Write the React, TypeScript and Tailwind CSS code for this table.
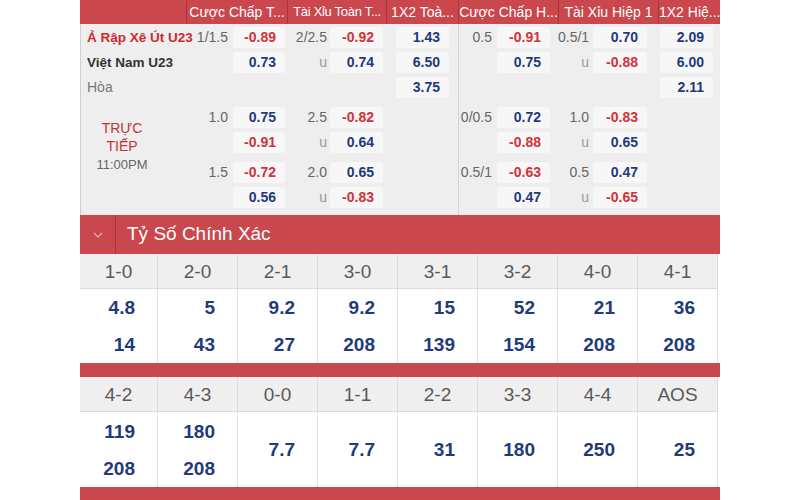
import { ReactNode } from "react"

type Pair = { l?: string; v?: string }

const ODD = "h-[21px] bg-[#f7f7f7] rounded-[3px] flex items-center justify-end pr-[9px] text-[14px] font-bold"
const LABEL = "h-[21px] leading-[21px] text-right text-[14px] text-[#666]"

function Box({ v, w }: { v?: string; w: string }) {
  if (!v) return <div className={`${w} h-[21px]`} />
  const color = v.startsWith("-") ? "text-[#d2323a]" : "text-[#1f3a7c]"
  return <div className={`${w} ${ODD} ${color}`}>{v}</div>
}

function Label({ t, w }: { t?: string; w: string }) {
  return <div className={`${w} ${LABEL} ${t === "u" ? "text-[#999]" : ""}`}>{t}</div>
}

// one row of the full-time block: handicap, over/under, 1x2
function FullRow({ cc, tx, x12 }: { cc?: Pair; tx?: Pair; x12?: string }) {
  return (
    <div className="flex h-[25px]">
      <div className="w-[101px] flex">
        <Label t={cc?.l} w="w-[42px]" />
        <div className="ml-[5px]">
          <Box v={cc?.v} w="w-[52px]" />
        </div>
      </div>
      <div className="w-[99px] flex">
        <Label t={tx?.l} w="w-[40px]" />
        <div className="ml-[3px]">
          <Box v={tx?.v} w="w-[53px]" />
        </div>
      </div>
      <div className="w-[72px] pl-[10px]">
        <Box v={x12} w="w-[53px]" />
      </div>
    </div>
  )
}

function HalfRow({ cc, tx, x12 }: { cc?: Pair; tx?: Pair; x12?: string }) {
  return (
    <div className="flex h-[25px]">
      <div className="w-[99px] flex">
        <Label t={cc?.l} w="w-[33px]" />
        <div className="ml-[5px]">
          <Box v={cc?.v} w="w-[53px]" />
        </div>
      </div>
      <div className="w-[100px] flex">
        <Label t={tx?.l} w="w-[31px]" />
        <div className="ml-[4px]">
          <Box v={tx?.v} w="w-[54px]" />
        </div>
      </div>
      <div className="w-[62px] pl-[2px]">
        <Box v={x12} w="w-[53px]" />
      </div>
    </div>
  )
}

function Groups({ children }: { children: ReactNode[] }) {
  return (
    <div className="flex flex-col pb-[3px]">
      <div className="pt-[3px]">{children[0]}</div>
      <div className="pt-[5px]">{children[1]}</div>
      <div className="pt-[5px]">{children[2]}</div>
    </div>
  )
}

const headers = [
  { t: "", w: "w-[106px]", f: "text-[14px]" },
  { t: "Cược Chấp T...", w: "w-[101px]", f: "text-[14px]" },
  { t: "Tài Xỉu Toàn T...", w: "w-[99px]", f: "text-[13px] tracking-[-0.3px]" },
  { t: "1X2 Toà...", w: "w-[72px]", f: "text-[14px]" },
  { t: "Cược Chấp H...", w: "w-[100px]", f: "text-[14px]" },
  { t: "Tài Xỉu Hiệp 1", w: "w-[100px]", f: "text-[14px]" },
  { t: "1X2 Hiệ...", w: "w-[62px]", f: "text-[14px]" },
]

const scoresA = [
  { s: "1-0", v: ["4.8", "14"] },
  { s: "2-0", v: ["5", "43"] },
  { s: "2-1", v: ["9.2", "27"] },
  { s: "3-0", v: ["9.2", "208"] },
  { s: "3-1", v: ["15", "139"] },
  { s: "3-2", v: ["52", "154"] },
  { s: "4-0", v: ["21", "208"] },
  { s: "4-1", v: ["36", "208"] },
]

const scoresB = [
  { s: "4-2", v: ["119", "208"] },
  { s: "4-3", v: ["180", "208"] },
  { s: "0-0", v: ["7.7"] },
  { s: "1-1", v: ["7.7"] },
  { s: "2-2", v: ["31"] },
  { s: "3-3", v: ["180"] },
  { s: "4-4", v: ["250"] },
  { s: "AOS", v: ["25"] },
]

function ScoreGrid({ items, h }: { items: { s: string; v: string[] }[]; h: string }) {
  return (
    <div className="grid grid-cols-[78px_repeat(7,80px)]">
      {items.map((it) => (
        <div key={it.s} className="h-[35px] leading-[35px] bg-[#efefef] border-r border-b border-[#dcdcdc] text-center text-[19px] text-[#5a5a5a]">
          {it.s}
        </div>
      ))}
      {items.map((it) => (
        <div key={it.s + "v"} className={`${h} bg-white border-r border-[#e2e2e2] flex flex-col justify-center items-end pr-[22px]`}>
          {it.v.map((x, i) => (
            <div key={i} className="leading-[37px] text-[19px] font-bold text-[#1f3a7c]">
              {x}
            </div>
          ))}
        </div>
      ))}
    </div>
  )
}

export default function App() {
  return (
    <div className="w-[800px] h-[500px] overflow-hidden bg-white font-['Liberation_Sans',Arial,sans-serif]">
      <div className="ml-[80px] w-[640px]">
        {/* odds header */}
        <div className="flex h-[24px] bg-[#c9474d] text-white">
          {headers.map((h, i) => (
            <div
              key={i}
              className={`${h.w} ${h.f} ${i > 0 ? "border-l border-[#a9353b]" : ""} leading-[24px] text-center whitespace-nowrap overflow-hidden`}
            >
              {h.t}
            </div>
          ))}
        </div>

        {/* odds body */}
        <div className="flex bg-[#eeeeee]">
          <div className="w-[106px] border-l border-[#cfcfcf] flex flex-col">
            <div className="pt-[3px] pl-[6px] text-[13.5px]">
              <div className="h-[25px] leading-[21px] font-bold text-[#cc2b31] whitespace-nowrap">Ả Rập Xê Út U23</div>
              <div className="h-[25px] leading-[21px] font-bold text-[#333]">Việt Nam U23</div>
              <div className="h-[25px] leading-[21px] text-[#777] text-[14px]">Hòa</div>
            </div>
            <div className="w-[82px] pt-[17px] text-center text-[14px] leading-[18px]">
              <div className="text-[#c0353a]">TRỰC</div>
              <div className="text-[#c0353a]">TIẾP</div>
              <div className="text-[#666] text-[13px] leading-[20px]">11:00PM</div>
            </div>
          </div>

          <div className="w-[272px]">
            <Groups>
              {[
                <div key="a">
                  <FullRow cc={{ l: "1/1.5", v: "-0.89" }} tx={{ l: "2/2.5", v: "-0.92" }} x12="1.43" />
                  <FullRow cc={{ v: "0.73" }} tx={{ l: "u", v: "0.74" }} x12="6.50" />
                  <FullRow x12="3.75" />
                </div>,
                <div key="b">
                  <FullRow cc={{ l: "1.0", v: "0.75" }} tx={{ l: "2.5", v: "-0.82" }} />
                  <FullRow cc={{ v: "-0.91" }} tx={{ l: "u", v: "0.64" }} />
                </div>,
                <div key="c">
                  <FullRow cc={{ l: "1.5", v: "-0.72" }} tx={{ l: "2.0", v: "0.65" }} />
                  <FullRow cc={{ v: "0.56" }} tx={{ l: "u", v: "-0.83" }} />
                </div>,
              ]}
            </Groups>
          </div>

          <div className="w-[262px] border-l border-[#d4d4d4]">
            <Groups>
              {[
                <div key="a">
                  <HalfRow cc={{ l: "0.5", v: "-0.91" }} tx={{ l: "0.5/1", v: "0.70" }} x12="2.09" />
                  <HalfRow cc={{ v: "0.75" }} tx={{ l: "u", v: "-0.88" }} x12="6.00" />
                  <HalfRow x12="2.11" />
                </div>,
                <div key="b">
                  <HalfRow cc={{ l: "0/0.5", v: "0.72" }} tx={{ l: "1.0", v: "-0.83" }} />
                  <HalfRow cc={{ v: "-0.88" }} tx={{ l: "u", v: "0.65" }} />
                </div>,
                <div key="c">
                  <HalfRow cc={{ l: "0.5/1", v: "-0.63" }} tx={{ l: "0.5", v: "0.47" }} />
                  <HalfRow cc={{ v: "0.47" }} tx={{ l: "u", v: "-0.65" }} />
                </div>,
              ]}
            </Groups>
          </div>
        </div>

        {/* exact score */}
        <div className="flex h-[39px] bg-[#c9474d] items-center">
          <div className="w-[36px] h-full border-r border-[#a9353b] flex items-center justify-center">
            <svg width="10" height="6" viewBox="0 0 10 6" fill="none" stroke="#eeb2b4" strokeWidth="1.2">
              <polyline points="1,1 5,5 9,1" />
            </svg>
          </div>
          <div className="pl-[11px] text-white text-[19px]">Tỷ Số Chính Xác</div>
        </div>
        <ScoreGrid items={scoresA} h="h-[74px]" />
        <div className="h-[14px] bg-[#c9474d]" />
        <ScoreGrid items={scoresB} h="h-[75px]" />
        <div className="h-[13px] bg-[#c9474d]" />
      </div>
    </div>
  )
}
